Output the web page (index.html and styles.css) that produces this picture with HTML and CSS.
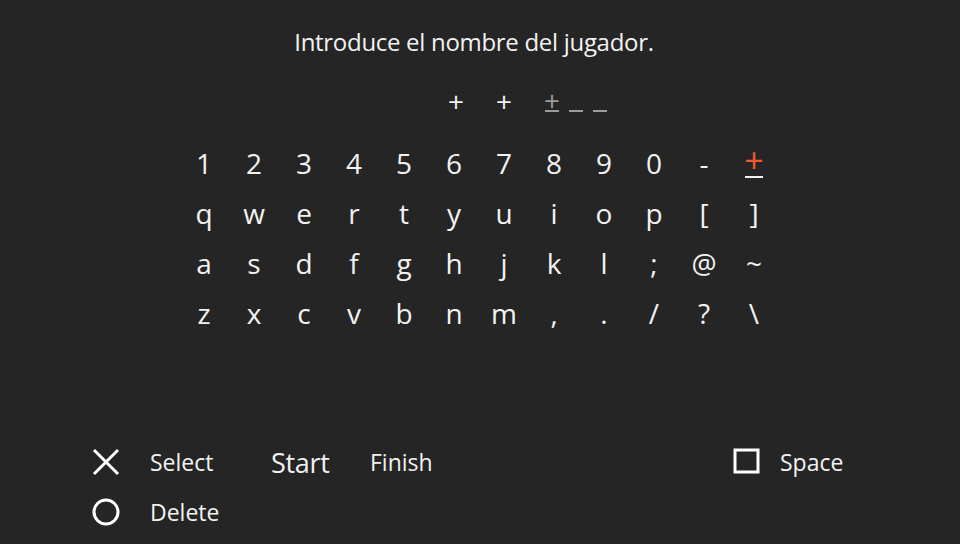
FILE: index.html
```html
<!DOCTYPE html>
<html lang="es">
<head>
<meta charset="utf-8">
<title>Introduce el nombre del jugador</title>
<link rel="stylesheet" href="styles.css">
</head>
<body>
<div class="screen">
  <div class="title">Introduce el nombre del jugador.</div>
  <div class="name">
    <span class="slot filled">+</span>
    <span class="slot"></span>
    <span class="slot filled">+</span>
    <span class="slot"></span>
    <span class="slot current"><span class="plus">+</span></span>
    <span class="slot empty"></span>
    <span class="slot empty"></span>
  </div>
  <div class="keys">
    <span>1</span><span>2</span><span>3</span><span>4</span><span>5</span><span>6</span><span>7</span><span>8</span><span>9</span><span>0</span><span>-</span><span class="sel"><span class="plus">+</span></span>
    <span>q</span><span>w</span><span>e</span><span>r</span><span>t</span><span>y</span><span>u</span><span>i</span><span>o</span><span>p</span><span>[</span><span>]</span>
    <span>a</span><span>s</span><span>d</span><span>f</span><span>g</span><span>h</span><span>j</span><span>k</span><span>l</span><span>;</span><span>@</span><span>~</span>
    <span>z</span><span>x</span><span>c</span><span>v</span><span>b</span><span>n</span><span>m</span><span>,</span><span>.</span><span>/</span><span>?</span><span>\</span>
  </div>
  <div class="footer">
    <svg class="icon" viewBox="0 0 28 28"><path d="M2 2 L26 26 M26 2 L2 26" stroke="#fff" stroke-width="3" fill="none"/></svg>
    <span class="label">Select</span>
    <span class="label start">Start</span>
    <span class="label">Finish</span>
    <svg class="icon" viewBox="0 0 28 28"><rect x="2" y="2" width="23" height="22" stroke="#fff" stroke-width="3" fill="none"/></svg>
    <span class="label space">Space</span>
    <svg class="icon" viewBox="0 0 28 28"><circle cx="14" cy="14" r="12" stroke="#fff" stroke-width="3" fill="none"/></svg>
    <span class="label">Delete</span>
  </div>
</div>
</body>
</html>
```

FILE: styles.css
```css
html, body {
  margin: 0;
  padding: 0;
  background: #252525;
}
.screen {
  width: 960px;
  height: 544px;
  display: flex;
  flex-direction: column;
  font-family: "Open Sans", "Noto Sans", sans-serif;
  font-weight: 500;
  color: #f2f2f2;
  overflow: hidden;
}
.title {
  margin-top: 27px;
  padding-right: 12px;
  height: 30px;
  line-height: 30px;
  font-size: 24px;
  text-align: center;
  letter-spacing: -0.3px;
}
.name {
  margin-top: 29px;
  height: 30px;
  display: flex;
  padding-left: 444px;
  color: #f2f2f2;
  font-size: 28px;
  font-weight: 400;
}
.slot {
  width: 24px;
  height: 30px;
  display: flex;
  align-items: center;
  justify-content: center;
  position: relative;
}
.slot.current, .slot.empty { color: #9a9a9a; }
.slot.current::after, .slot.empty::after {
  content: "";
  position: absolute;
  left: 5px;
  right: 5px;
  bottom: 4px;
  height: 2px;
  background: #9a9a9a;
}
.plus { line-height: 1; }
.slot .plus { margin-top: -2px; }
.keys {
  margin: 22px auto 0;
  display: grid;
  grid-template-columns: repeat(12, 50px);
  grid-auto-rows: 50px;
  font-size: 28px;
  transform: translateX(-1px);
}
.keys > span {
  display: flex;
  align-items: center;
  justify-content: center;
  line-height: 1;
}
.keys .sel {
  color: #ee5a2c;
  position: relative;
}
.keys .sel .plus { font-size: 34px; font-weight: 400; margin-top: -6px; }
.keys .sel::after {
  content: "";
  position: absolute;
  left: 16px;
  right: 16px;
  bottom: 10px;
  height: 2px;
  background: #f2f2f2;
}
.footer {
  margin-top: auto;
  margin-bottom: 7px;
  padding-left: 92px;
  display: grid;
  grid-template-columns: 28px 151px 99px 363px 28px auto;
  grid-auto-rows: 50px;
  align-items: center;
}
.icon {
  width: 28px;
  height: 28px;
  display: block;
}
.label {
  font-size: 23px;
  line-height: 1;
}
.footer > .label:nth-child(2) { padding-left: 30px; }
.label.start { font-size: 27px; font-weight: 500; letter-spacing: -0.3px; }
.label.space { padding-left: 19px; }
.footer > .label:last-child { padding-left: 30px; }
```
